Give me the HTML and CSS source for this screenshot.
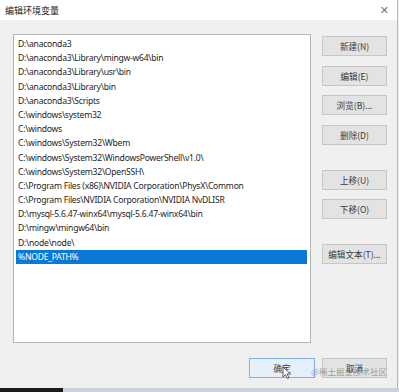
FILE: index.html
```html
<!DOCTYPE html>
<html lang="zh-CN">
<head>
  <meta charset="UTF-8">
  <title>编辑环境变量</title>
  <link rel="stylesheet" href="styles.css">
</head>
<body>
  <div class="dialog">
    <div class="titlebar">
      <span class="title">编辑环境变量</span>
      <span class="close">✕</span>
    </div>

    <div class="content">
      <div class="main">
        <div class="listbox">
          <div class="item">D:\anaconda3</div>
          <div class="item">D:\anaconda3\Library\mingw-w64\bin</div>
          <div class="item">D:\anaconda3\Library\usr\bin</div>
          <div class="item">D:\anaconda3\Library\bin</div>
          <div class="item">D:\anaconda3\Scripts</div>
          <div class="item">C:\windows\system32</div>
          <div class="item">C:\windows</div>
          <div class="item">C:\windows\System32\Wbem</div>
          <div class="item">C:\windows\System32\WindowsPowerShell\v1.0\</div>
          <div class="item">C:\windows\System32\OpenSSH\</div>
          <div class="item">C:\Program Files (x86)\NVIDIA Corporation\PhysX\Common</div>
          <div class="item">C:\Program Files\NVIDIA Corporation\NVIDIA NvDLISR</div>
          <div class="item">D:\mysql-5.6.47-winx64\mysql-5.6.47-winx64\bin</div>
          <div class="item">D:\mingw\mingw64\bin</div>
          <div class="item">D:\node\node\</div>
          <div class="item selected">%NODE_PATH%</div>
        </div>

        <div class="side">
          <div class="btn-group">
            <button class="btn">新建(N)</button>
            <button class="btn">编辑(E)</button>
            <button class="btn">浏览(B)...</button>
            <button class="btn">删除(D)</button>
          </div>
          <div class="btn-group">
            <button class="btn">上移(U)</button>
            <button class="btn">下移(O)</button>
          </div>
          <div class="btn-group">
            <button class="btn">编辑文本(T)...</button>
          </div>
        </div>
      </div>

      <div class="footer">
        <button class="btn btn-ok">确定</button>
        <button class="btn">取消</button>
      </div>
    </div>

    <div class="watermark">@稀土掘金技术社区</div>
    <svg class="cursor" width="10" height="14" viewBox="0 0 10 14">
      <path d="M1 1 L1 11 L3.5 8.6 L5.4 12.6 L7 11.8 L5.2 8 L8.6 8 Z" fill="#fff" stroke="#333" stroke-width="0.8"/>
    </svg>
  </div>
  <div class="taskbar">
    <div class="taskbar-dark"></div>
  </div>
</body>
</html>
```

FILE: styles.css
```css
html, body {
  margin: 0;
  padding: 0;
  width: 399px;
  height: 392px;
  overflow: hidden;
  background: #f0f0f0;
  font-family: "Noto Sans CJK SC", "Noto Sans", sans-serif;
  font-size: 9px;
  color: #1a1a1a;
}
.dialog {
  position: relative;
  height: 388px;
  border-right: 1px solid #9bbde3;
  box-sizing: border-box;
  width: 398px;
  display: flex;
  flex-direction: column;
}
.titlebar {
  height: 20px;
  background: #fff;
  display: flex;
  align-items: center;
  justify-content: space-between;
  padding: 0 8px 0 5px;
}
.title {
  font-size: 9px;
  color: #222;
}
.close {
  font-size: 11px;
  color: #777;
  font-family: "DejaVu Sans", sans-serif;
}
.content {
  flex: 1;
  display: flex;
  flex-direction: column;
  padding: 14px 10px 0 13px;
}
.main {
  display: flex;
  gap: 11px;
}
.listbox {
  width: 298px;
  height: 309px;
  box-sizing: border-box;
  background: #fff;
  border: 1px solid #b4b4b4;
  padding: 2px 3px 0 2px;
}
.item {
  height: 14.2px;
  line-height: 14.2px;
  padding-left: 2px;
  font-family: "Noto Sans", "Noto Sans CJK SC", sans-serif;
  font-size: 8.6px;
  letter-spacing: -0.25px;
  white-space: nowrap;
  overflow: hidden;
  color: #1e1e1e;
}
.item.selected {
  background: #0a78d7;
  color: #fff;
}
.side {
  display: flex;
  flex-direction: column;
  padding-top: 2px;
  gap: 25px;
}
.btn-group {
  display: flex;
  flex-direction: column;
  gap: 9.5px;
}
.btn {
  width: 65px;
  height: 20px;
  padding: 0;
  margin: 0;
  font-family: "Noto Sans CJK SC", "Noto Sans", sans-serif;
  font-size: 8.6px;
  color: #3a3a3a;
  background: #e3e3e3;
  border: 1px solid #c6c6c6;
  border-radius: 0;
}
.footer {
  display: flex;
  justify-content: flex-end;
  gap: 7px;
  margin-top: 15px;
}
.btn-ok {
  width: 66px;
  background: #e6f0fa;
  border-color: #7fb1e6;
}
.watermark {
  position: absolute;
  right: 10px;
  bottom: 11px;
  font-size: 8.5px;
  color: rgba(90, 90, 90, 0.55);
}
.cursor {
  position: absolute;
  left: 282px;
  top: 366px;
}
.taskbar {
  height: 4px;
  background: #c9d3de;
}
.taskbar-dark {
  width: 63px;
  height: 4px;
  background: #1b1b1b;
}
```
